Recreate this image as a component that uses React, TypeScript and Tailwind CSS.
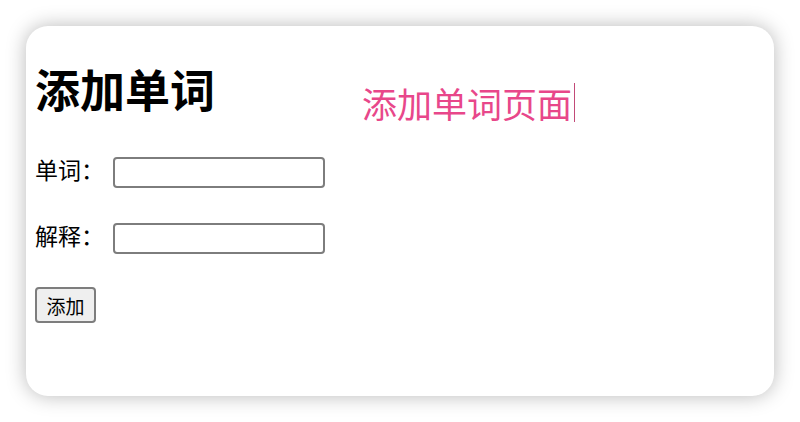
import React from "react";

const font = { fontFamily: '"PingFang SC", "Noto Sans CJK SC", "Noto Sans", sans-serif' };

function Field({ label }: { label: string }) {
  return (
    <div className="flex h-[30px] items-center">
      <span className="mb-[6px] w-[78px] text-[23px] leading-none text-black">{label}</span>
      <input
        type="text"
        className="h-[31px] w-[212px] rounded-[4px] border-2 border-[#7d7d7d] bg-white px-1 outline-none"
      />
    </div>
  );
}

export default function App() {
  return (
    <div className="min-h-[422px] bg-white p-[26px]" style={font}>
      <div className="flex h-[370px] w-[748px] flex-col rounded-[22px] bg-white pl-[9px] shadow-[0_0_20px_rgba(0,0,0,0.28)]">
        <div className="mt-[40px] flex items-start">
          <h1 className="text-[45px] font-bold leading-[45px] text-black">添加单词</h1>
          <div className="ml-[147px] mt-[17px] flex items-center">
            <span className="text-[35px] leading-[35px] text-[#e8478a]">添加单词页面</span>
            <span className="ml-[2px] inline-block h-[39px] w-px bg-[#c24a78]" />
          </div>
        </div>

        <div className="mt-[35px] flex flex-col gap-[36px]">
          <Field label="单词：" />
          <Field label="解释：" />
        </div>

        <div className="mt-[34px]">
          <button className="h-[36px] w-[61px] rounded-[4px] border-2 border-[#7d7d7d] bg-[#efefef] text-[19px] leading-none text-black">
            添加
          </button>
        </div>
      </div>
    </div>
  );
}
